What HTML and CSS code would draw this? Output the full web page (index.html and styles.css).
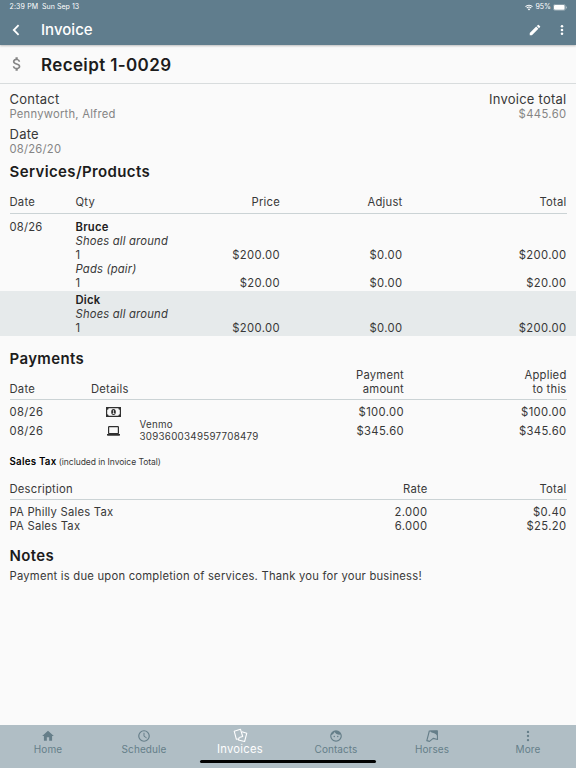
FILE: index.html
```html
<!DOCTYPE html>
<html lang="en">
<head>
<meta charset="utf-8">
<title>Invoice</title>
<link rel="stylesheet" href="styles.css">
</head>
<body>
<header class="appbar">
  <div class="status">
    <span class="time">2:39 PM</span><span>Sun Sep 13</span>
    <span class="power">
      <svg width="8" height="7" viewBox="0 0 16 13" fill="none" stroke="#fff" stroke-width="2.1"><path d="M1 4.8a10 10 0 0 1 14 0M3.5 7.6a6.5 6.5 0 0 1 9 0"/><path d="M5.5 9.7a3.6 3.6 0 0 1 5 0L8 12.5z" fill="#fff" stroke="none"/></svg>
      <span>95%</span>
      <svg width="14" height="7" viewBox="0 0 14 7"><rect x=".4" y=".4" width="12" height="6" rx="1.7" fill="none" stroke="#fff" stroke-opacity=".45" stroke-width=".6"/><rect x="1" y="1" width="10.6" height="4.8" rx="1" fill="#fff"/><path d="M13 2.3q1 .2 1 1.2t-1 1.2z" fill="#fff" opacity=".5"/></svg>
    </span>
  </div>
  <div class="toolbar">
    <svg class="back" width="8" height="12" viewBox="0 0 8 12" fill="none" stroke="#fff" stroke-width="1.8"><path d="M6.600 1.200 1.800 6l4.800 4.800"/></svg>
    <h1>Invoice</h1>
    <svg class="edit" width="14" height="14" viewBox="0 0 24 24" fill="#fff"><path d="M3 17.25V21h3.75L17.81 9.94l-3.75-3.75L3 17.25zM20.71 7.04a1 1 0 0 0 0-1.41l-2.34-2.34a1 1 0 0 0-1.41 0l-1.83 1.83 3.75 3.75 1.83-1.83z"/></svg>
    <svg width="14" height="14" viewBox="0 0 24 24" fill="#fff"><circle cx="12" cy="5.500" r="2.200"/><circle cx="12" cy="12" r="2.200"/><circle cx="12" cy="18.500" r="2.200"/></svg>
  </div>
</header>
<section class="receipt">
  <svg width="18" height="18" viewBox="0 0 24 24" fill="#858585"><path d="M11.8 10.9c-2.27-.59-3-1.2-3-2.15 0-1.09 1.01-1.85 2.7-1.85 1.78 0 2.44.85 2.5 2.1h2.21c-.07-1.72-1.12-3.3-3.21-3.81V3h-3v2.16c-1.94.42-3.5 1.68-3.5 3.61 0 2.31 1.91 3.46 4.7 4.13 2.5.6 3 1.48 3 2.41 0 .69-.49 1.79-2.7 1.79-2.06 0-2.87-.92-2.98-2.1h-2.2c.12 2.19 1.76 3.42 3.68 3.83V21h3v-2.15c1.95-.37 3.5-1.5 3.5-3.55 0-2.84-2.43-3.81-4.7-4.4z"/></svg>
  <h2>Receipt 1-0029</h2>
</section>
<main>
  <section class="summary">
    <div>
      <div class="label">Contact</div><div class="value">Pennyworth, Alfred</div>
      <div class="label second">Date</div><div class="value">08/26/20</div>
    </div>
    <div class="right">
      <div class="label">Invoice total</div><div class="value amount">$445.60</div>
    </div>
  </section>

  <h3>Services/Products</h3>
  <div class="row services head"><span>Date</span><span>Qty</span><span>Price</span><span>Adjust</span><span>Total</span></div>
  <div class="group first">
    <div class="row services"><span>08/26</span><b>Bruce</b></div>
    <div class="row services"><span></span><i>Shoes all around</i></div>
    <div class="row services figures"><span></span><span>1</span><span>$200.00</span><span>$0.00</span><span>$200.00</span></div>
    <div class="row services"><span></span><i>Pads (pair)</i></div>
    <div class="row services figures"><span></span><span>1</span><span>$20.00</span><span>$0.00</span><span>$20.00</span></div>
  </div>
  <div class="group shaded">
    <div class="row services"><span></span><b>Dick</b></div>
    <div class="row services"><span></span><i>Shoes all around</i></div>
    <div class="row services figures"><span></span><span>1</span><span>$200.00</span><span>$0.00</span><span>$200.00</span></div>
  </div>

  <h3 class="payments-title">Payments</h3>
  <div class="row payments head"><span>Date</span><span class="details">Details</span><span></span><span>Payment<br>amount</span><span>Applied<br>to this</span></div>
  <div class="row payments cash figures"><span>08/26</span>
    <span class="method"><svg width="15" height="10" viewBox="0 0 15 10"><path d="M0 0h15v10H0z" fill="#303030"/><path d="M2.6 1.2h9.8q0 1.5 1.4 1.5v4.6q-1.4 0-1.4 1.5H2.6q0-1.5-1.4-1.5V2.7q1.4 0 1.4-1.5z" fill="#fafafa"/><ellipse cx="7.5" cy="5" rx="2.3" ry="2.9" fill="#303030"/><path d="M6.7 3.9 7.5 3.2h.5v3.1h.6v.6H6.6v-.6h.7V4.2z" fill="#fafafa"/></svg></span>
    <span></span><span>$100.00</span><span>$100.00</span></div>
  <div class="row payments venmo figures"><span>08/26</span>
    <span class="method"><svg width="13" height="10" viewBox="0 0 13 10"><rect x="1.600" y=".7" width="9.800" height="6.9" rx=".6" fill="none" stroke="#303030" stroke-width="1.2"/><path d="M0 8h13v1q0 .7-.8.7H.8Q0 9.700 0 9z" fill="#303030"/></svg></span>
    <span class="reference">Venmo<br>3093600349597708479</span><span>$345.60</span><span>$345.60</span></div>

  <div class="tax-title"><b>Sales Tax</b> (included in Invoice Total)</div>
  <div class="row tax head"><span>Description</span><span>Rate</span><span>Total</span></div>
  <div class="tax-lines">
    <div class="row tax"><span>PA Philly Sales Tax</span><span class="amount">2.000</span><span class="amount">$0.40</span></div>
    <div class="row tax"><span>PA Sales Tax</span><span class="amount">6.000</span><span class="amount">$25.20</span></div>
  </div>

  <h3 class="notes-title">Notes</h3>
  <p>Payment is due upon completion of services. Thank you for your business!</p>
</main>
<nav>
  <a><svg width="14" height="14" viewBox="0 0 24 24" fill="currentColor"><path d="M10 20v-6h4v6h5v-8h3L12 3 2 12h3v8z"/></svg><span>Home</span></a>
  <a><svg width="14" height="14" viewBox="0 0 24 24" fill="none" stroke="currentColor" stroke-width="2"><circle cx="12" cy="12" r="9"/><path d="M12 6.500v6l4.500 2.700" stroke-width="1.7"/></svg><span>Schedule</span></a>
  <a class="active"><svg width="15" height="15" viewBox="0 0 15 15" fill="none" stroke="currentColor" stroke-width="1.1" stroke-linejoin="round"><path d="M5.300 11 3.400 11.300 1.200 3.200 7.500 1.300l2.200 7.200-3.500 1"/><path d="M8.900 3.700l4.900 1.500-2.200 8.300-6.200-1.500.8-2.500"/></svg><span>Invoices</span></a>
  <a><svg width="14" height="14" viewBox="0 0 24 24" fill="currentColor"><circle cx="9" cy="13" r="1.3"/><circle cx="15" cy="13" r="1.3"/><path fill-rule="evenodd" d="M12 2a10 10 0 1 0 0 20 10 10 0 0 0 0-20zM4 12c0-.6 0-1 .1-1.300 2.400-1 4.200-3 5.200-5.400a10 10 0 0 0 10.300 4.100A8 8 0 1 1 4 12z"/></svg><span>Contacts</span></a>
  <a><svg width="14" height="14" viewBox="0 0 14 14" fill="none" stroke="currentColor" stroke-width="1.100" stroke-linejoin="round"><path d="M4.300 2 12.300 1.700l.2 8.800-4.300-1.100-3.700 3-2.700-.8L3.300 6z"/><path d="M5 1.700H12.500V7.500Q10.800 4 6.500 3.600z" fill="currentColor" stroke="none"/></svg><span>Horses</span></a>
  <a><svg width="14" height="14" viewBox="0 0 24 24" fill="currentColor"><circle cx="12" cy="5" r="2"/><circle cx="12" cy="12" r="2"/><circle cx="12" cy="19" r="2"/></svg><span>More</span></a>
  <div class="home-indicator"></div>
</nav>
</body>
</html>
```

FILE: styles.css
```css
* { box-sizing: border-box; }
body {
  margin: 0;
  width: 576px;
  height: 768px;
  display: flex;
  flex-direction: column;
  overflow: hidden;
  background: #fafafa;
  color: #383838;
  font: 11.25px/14px Inter, "Liberation Sans", sans-serif;
  letter-spacing: .22px;
}
h1, h2, h3, p { margin: 0; }
svg { display: block; flex: none; }
b { font-weight: 600; color: #202020; }
i { letter-spacing: .18px; }

.appbar {
  height: 45px;
  background: #607d8d;
  color: #fff;
  box-shadow: 0 1px 2px rgba(0, 0, 0, .25);
  z-index: 1;
}
.status {
  display: flex;
  align-items: center;
  height: 14px;
  padding: 0 9px 0 9.500px;
  font-size: 7px;
  letter-spacing: .05px;
}
.time { width: 32.500px; letter-spacing: .15px; }
.power { display: flex; align-items: center; gap: 2px; margin-left: auto; }
.toolbar { display: flex; align-items: center; height: 31px; padding: 0 7px 0 12px; }
.toolbar h1 { margin: 0 auto 0 21px; padding-top: 1px; font-size: 15px; line-height: 20px; font-weight: 500; letter-spacing: .02px; }
.edit { margin-right: 13px; }

.receipt {
  display: flex;
  align-items: center;
  height: 39px;
  padding-left: 8px;
  border-bottom: 1px solid #d8dcdd;
}
.receipt h2 { margin-left: 15px; padding-top: 1px; font-size: 17px; line-height: 22px; font-weight: 600; letter-spacing: .37px; color: #1c1c1c; }

main { flex: 1; }
.summary { display: flex; justify-content: space-between; padding: 8px 9.500px 0; }
.right { text-align: right; }
.label { font-size: 13px; line-height: 15px; letter-spacing: .25px; }
.value { color: #858585; line-height: 15px; letter-spacing: .22px; }
.second { margin-top: 5px; }
.value.amount, .amount, .figures { letter-spacing: .37px; }

h3 { padding-left: 9.500px; margin-top: 6px; font-size: 15px; line-height: 18px; font-weight: 600; letter-spacing: .38px; color: #1c1c1c; }

.row { display: grid; margin: 0 9.500px; }
.head { border-bottom: 1px solid #cbd3d5; }
.services { grid-template-columns: 66px 92px 112.500px 122.500px 1fr; }
.services > :nth-child(n+3) { text-align: right; }
.services.head { height: 19px; margin-top: 14px; }
.first { padding: 6px 0 1px; }
.services i { white-space: nowrap; }
.shaded { background: #e6eaeb; padding: 2px 0 1px; }

.payments { grid-template-columns: 81.500px 48.500px 150px 114.500px 1fr; align-items: center; }
.payments > :nth-child(n+4) { text-align: right; }
.payments.head { align-items: end; height: 32px; padding-bottom: 4px; }
.payments-title { margin-top: 14px; }
.cash { height: 18px; margin-top: 3px; }
.venmo { height: 20px; grid-template-rows: 19px; }
.method { display: flex; justify-content: center; width: 45px; }
.reference { font-size: 9.750px; line-height: 12px; letter-spacing: .28px; }

.tax-title { margin: 15px 9.500px 0; font-size: 8.500px; line-height: 12px; letter-spacing: -.04px; }
.tax-title b { font-size: 9.750px; letter-spacing: .22px; color: #000; }
.tax { grid-template-columns: 1fr 120px 139px; }
.tax > :nth-child(n+2) { text-align: right; }
.tax.head { height: 18px; margin-top: 14px; }
.tax-lines { padding-top: 5px; }
.notes-title { margin-top: 14px; }
p { margin: 4px 9.500px 0; }

nav {
  position: relative;
  display: flex;
  height: 43px;
  padding-top: 3px;
  background: #b0bec5;
  color: #657e89;
}
nav a { flex: 1; display: flex; flex-direction: column; align-items: center; height: 31px; font-size: 10px; letter-spacing: .08px; }
nav a svg { margin: .5px 0 -.5px; }
nav .active { color: #fff; font-size: 11.250px; letter-spacing: .25px; }
nav .active svg { margin: 0 0 -1px; }
.home-indicator {
  position: absolute;
  left: 200px;
  bottom: 5px;
  width: 176px;
  height: 3px;
  border-radius: 2px;
  background: #000;
}
```
